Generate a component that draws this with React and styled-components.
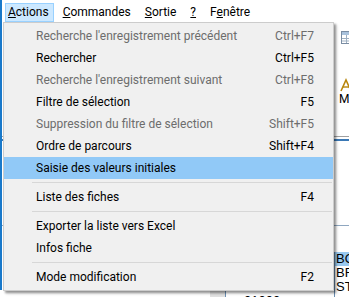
import React from "react";
import styled, { createGlobalStyle } from "styled-components";

const GlobalStyle = createGlobalStyle`
	html, body {
		margin: 0;
		padding: 0;
		background: #ffffff;
	}
	body {
		font-family: Roboto, "Noto Sans", "Liberation Sans", sans-serif;
		font-size: 12px;
		color: #000000;
	}
`;

const menuTitles = [
	{ label: "Actions", key: "A", active: true },
	{ label: "Commandes", key: "C" },
	{ label: "Sortie", key: "S" },
	{ label: "?", key: "?" },
	{ label: "Fenêtre", key: "e" },
];

const groups = [
	[
		{ label: "Recherche l'enregistrement précédent", shortcut: "Ctrl+F7", disabled: true },
		{ label: "Rechercher", shortcut: "Ctrl+F5" },
		{ label: "Recherche l'enregistrement suivant", shortcut: "Ctrl+F8", disabled: true },
		{ label: "Filtre de sélection", shortcut: "F5" },
		{ label: "Suppression du filtre de sélection", shortcut: "Shift+F5", disabled: true },
		{ label: "Ordre de parcours", shortcut: "Shift+F4" },
		{ label: "Saisie des valeurs initiales", active: true },
	],
	[{ label: "Liste des fiches", shortcut: "F4" }],
	[{ label: "Exporter la liste vers Excel" }, { label: "Infos fiche" }],
	[{ label: "Mode modification", shortcut: "F2" }],
];

const rows = [
	{ code: "", name: "BO", selected: true },
	{ code: "", name: "BR" },
	{ code: "", name: "ST" },
	{ code: "01000", name: "" },
];

const Underlined = ({ label, hot }) => {
	const i = label.indexOf(hot);
	if (i < 0) return label;
	return (
		<>
			{label.slice(0, i)}
			<u>{label[i]}</u>
			{label.slice(i + 1)}
		</>
	);
};

const GridIcon = () => (
	<svg width="18" height="16" viewBox="0 0 18 16">
		<rect x="0.5" y="1.5" width="15" height="12" fill="#ffffff" stroke="#7a8da3" />
		<rect x="1" y="2" width="14" height="3" fill="#a9c2dc" />
		<path d="M1 8.5h14M1 11h14M5.5 5v8M10.5 5v8" stroke="#9fb0c2" />
		<path d="M11 12l3-3 3 3z" fill="#3ea33a" />
	</svg>
);

const BigIcon = () => (
	<svg width="14" height="14" viewBox="0 0 14 14">
		<path d="M2 13L7 2l5 11" fill="none" stroke="#b8860b" strokeWidth="1.6" />
		<path d="M4 9h6" stroke="#b8860b" strokeWidth="1.4" />
	</svg>
);

export default function App() {
	return (
		<>
			<GlobalStyle />
			<Window>
				<MenuBar>
					{menuTitles.map((m) => (
						<MenuTitle key={m.label} $active={m.active}>
							<Underlined label={m.label} hot={m.key} />
						</MenuTitle>
					))}
				</MenuBar>

				<Toolbar>
					{Array.from({ length: 14 }).map((_, i) => (
						<ToolButton key={i} />
					))}
					<ToolButton>
						<GridIcon />
					</ToolButton>
				</Toolbar>

				<BigToolbar>
					{Array.from({ length: 9 }).map((_, i) => (
						<BigButton key={i} />
					))}
					<BigButton>
						<BigIcon />
						<BigLabel>M</BigLabel>
					</BigButton>
				</BigToolbar>

				<Splitter />

				<FormArea />

				<Grid>
					<GridHeader />
					{rows.map((r, i) => (
						<GridRow key={i}>
							<RowHeader />
							<CodeCell>{r.code}</CodeCell>
							<NameCell $selected={r.selected}>{r.name}</NameCell>
						</GridRow>
					))}
				</Grid>

				<Menu>
					{groups.map((g, gi) => (
						<React.Fragment key={gi}>
							{gi > 0 && <Separator />}
							{g.map((item) => (
								<MenuItem key={item.label} $active={item.active} $disabled={item.disabled}>
									<span>{item.label}</span>
									{item.shortcut && <Shortcut>{item.shortcut}</Shortcut>}
								</MenuItem>
							))}
						</React.Fragment>
					))}
				</Menu>
			</Window>
		</>
	);
}

const Window = styled.div`
	position: relative;
	width: 349px;
	height: 297px;
	overflow: hidden;
	background: #ffffff;
	box-sizing: border-box;
	display: flex;
	flex-direction: column;
	&::before {
		content: "";
		position: absolute;
		left: 0;
		top: 0;
		width: 2px;
		height: 290px;
		background: #1979ca;
	}
`;

const MenuBar = styled.div`
	height: 22px;
	flex: none;
	display: flex;
	align-items: flex-end;
	padding-left: 5px;
	gap: 1px;
	background: #ffffff;
`;

const MenuTitle = styled.div`
	height: 17px;
	line-height: 16px;
	padding: 0 4px 0 2px;
	margin-right: 5px;
	border: 1px solid ${(p) => (p.$active ? "#99d1ff" : "transparent")};
	background: ${(p) => (p.$active ? "#cce8ff" : "transparent")};
	white-space: nowrap;
`;

const Toolbar = styled.div`
	height: 32px;
	flex: none;
	display: flex;
	align-items: center;
	padding-left: 2px;
	background: #ffffff;
`;

const ToolButton = styled.div`
	width: 24px;
	height: 24px;
	flex: none;
	display: flex;
	align-items: center;
	justify-content: center;
`;

const BigToolbar = styled.div`
	height: 82px;
	flex: none;
	display: flex;
	align-items: flex-start;
	padding-top: 24px;
	padding-left: 2px;
	box-sizing: border-box;
	background: #ffffff;
`;

const BigButton = styled.div`
	width: 37px;
	flex: none;
	display: flex;
	flex-direction: column;
	align-items: flex-start;
	padding-left: 4px;
	box-sizing: border-box;
`;

const BigLabel = styled.div`
	font-size: 12px;
	line-height: 14px;
	color: #000000;
`;

const Splitter = styled.div`
	height: 5px;
	flex: none;
	border-top: 1px solid #a0a0a0;
	border-bottom: 2px solid #3a78b5;
	background: #ffffff;
	box-sizing: border-box;
`;

const FormArea = styled.div`
	height: 84px;
	flex: none;
	background: #ffffff;
	border-bottom: 1px solid #8fa7c0;
`;

const Grid = styled.div`
	flex: 1;
	display: flex;
	flex-direction: column;
	padding-top: 1px;
	background: #ffffff;
`;

const GridHeader = styled.div`
	height: 25px;
	flex: none;
`;

const GridRow = styled.div`
	height: 14px;
	flex: none;
	display: flex;
	font-family: "Liberation Sans", sans-serif;
	font-size: 13px;
	line-height: 14px;
`;

const RowHeader = styled.div`
	width: 226px;
	flex: none;
	box-sizing: border-box;
	border-right: 1px solid #6b8fb3;
	background: linear-gradient(to right, #ffffff 0 210px, #e1e1e1 210px 226px, #f4f4f4 226px);
`;

const CodeCell = styled.div`
	width: 95px;
	flex: none;
	padding-left: 4px;
	box-sizing: border-box;
	border-right: 1px solid #6b8fb3;
	margin-left: 14px;
	overflow: hidden;
`;

const NameCell = styled.div`
	flex: 1;
	padding-left: 1px;
	white-space: nowrap;
	background: ${(p) => (p.$selected ? "#99c9ef" : "transparent")};
`;

const Menu = styled.div`
	position: absolute;
	left: 3px;
	top: 22px;
	width: 331px;
	box-sizing: border-box;
	padding: 2px 0;
	background: #f0f0f0;
	border: 1px solid #cccccc;
	box-shadow: 2px 2px 2px rgba(0, 0, 0, 0.35), 3px 3px 3px rgba(0, 0, 0, 0.12);
	display: flex;
	flex-direction: column;
`;

const MenuItem = styled.div`
	height: 22px;
	display: flex;
	align-items: center;
	padding: 0 19px 0 32px;
	white-space: nowrap;
	color: ${(p) => (p.$disabled ? "#6d6d6d" : "#000000")};
	background: ${(p) => (p.$active ? "#91c9f7" : "transparent")};
`;

const Shortcut = styled.span`
	margin-left: auto;
`;

const Separator = styled.div`
	height: 7px;
	margin-left: 28px;
	margin-right: 1px;
	background: linear-gradient(#d7d7d7, #d7d7d7) 0 3px / 100% 1px no-repeat;
`;
